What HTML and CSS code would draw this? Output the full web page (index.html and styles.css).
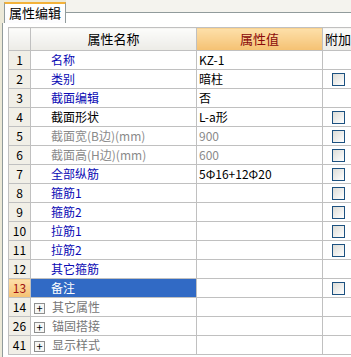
FILE: index.html
```html
<!DOCTYPE html><html><head><meta charset="utf-8"/>
<title>属性编辑</title>
<link rel="stylesheet" href="styles.css">
</head>
<body>
<div class="panel">
	<div class="tabbar">
		<div class="tab">属性编辑</div>
		<div class="tabfill"></div>
	</div>
	<div class="pane">
		<table class="grid">
			<colgroup><col class="c-no"><col class="c-name"><col class="c-val"><col class="c-add"></colgroup>
			<tr class="head">
				<th class="no"></th>
				<th>属性名称</th>
				<th class="hval">属性值</th>
				<th class="hadd">附加</th>
			</tr>
			<tr><td class="no">1</td><td class="nm blue">名称</td><td class="val">KZ-1</td><td></td></tr>
			<tr><td class="no">2</td><td class="nm blue">类别</td><td class="val">暗柱</td><td><span class="chk"></span></td></tr>
			<tr><td class="no">3</td><td class="nm blue">截面编辑</td><td class="val">否</td><td></td></tr>
			<tr><td class="no">4</td><td class="nm">截面形状</td><td class="val">L-a形</td><td><span class="chk"></span></td></tr>
			<tr><td class="no">5</td><td class="nm gray">截面宽(B边)(mm)</td><td class="val gray">900</td><td><span class="chk"></span></td></tr>
			<tr><td class="no">6</td><td class="nm gray">截面高(H边)(mm)</td><td class="val gray">600</td><td><span class="chk"></span></td></tr>
			<tr><td class="no">7</td><td class="nm blue">全部纵筋</td><td class="val">5Φ16+12Φ20</td><td><span class="chk"></span></td></tr>
			<tr><td class="no">8</td><td class="nm blue">箍筋1</td><td class="val"></td><td><span class="chk"></span></td></tr>
			<tr><td class="no">9</td><td class="nm blue">箍筋2</td><td class="val"></td><td><span class="chk"></span></td></tr>
			<tr><td class="no">10</td><td class="nm blue">拉筋1</td><td class="val"></td><td><span class="chk"></span></td></tr>
			<tr><td class="no">11</td><td class="nm blue">拉筋2</td><td class="val"></td><td><span class="chk"></span></td></tr>
			<tr><td class="no">12</td><td class="nm blue">其它箍筋</td><td class="val"></td><td></td></tr>
			<tr class="sel"><td class="no">13</td><td class="nm">备注</td><td class="val"></td><td><span class="chk"></span></td></tr>
			<tr><td class="no">14</td><td class="nm grp"><span class="plus">+</span>其它属性</td><td class="val"></td><td></td></tr>
			<tr><td class="no">26</td><td class="nm grp"><span class="plus">+</span>锚固搭接</td><td class="val"></td><td></td></tr>
			<tr><td class="no">41</td><td class="nm grp"><span class="plus">+</span>显示样式</td><td class="val"></td><td></td></tr>
		</table>
	</div>
</div>
</body>
</html>
```
FILE: styles.css
```css
html, body {
	margin: 0;
	padding: 0;
	overflow: hidden;
}
body {
	font-family: "Noto Sans CJK SC", "DejaVu Sans", sans-serif;
	font-size: 12px;
	color: #000;
	background: #ece9d8;
}
.panel {
	width: 351px;
	height: 357px;
	padding-left: 2px;
	box-sizing: border-box;
	display: flex;
	flex-direction: column;
	background: #ece9d8;
}
/* tabs */
.tabbar {
	display: flex;
	height: 23px;
}
.tab {
	margin-top: 2px;
	height: 21px;
	width: 62px;
	margin-left: 2px;
	box-sizing: border-box;
	border: 1px solid #919b9c;
	border-top: 2px solid #f3b23a;
	border-bottom: none;
	background: linear-gradient(#ffffff, #fcfcfe);
	font-size: 13px;
	line-height: 17px;
	padding-left: 4px;
}
.tabfill {
	flex: 1;
	background: linear-gradient(#f4f3ee 0 12px, #919b9c 12px 13px, #ffffff 13px);
}
.pane {
	flex: 1;
	background: #fff;
	border-left: 1px solid #919b9c;
	padding: 4px 0 0 5px;
	overflow: hidden;
}
/* grid */
.grid {
	border-collapse: collapse;
	table-layout: fixed;
	width: 362px;
}
.c-no { width: 22px; }
.c-name { width: 166px; }
.c-val { width: 126px; }
.c-add { width: 48px; }
.grid td, .grid th {
	border: 1px solid #c0c0c0;
	height: 18px;
	padding: 0;
	white-space: nowrap;
	overflow: hidden;
	line-height: 18px;
}
.grid th {
	height: 22px;
	font-weight: normal;
	font-size: 13px;
	background: linear-gradient(#fcfcfb, #ecebe6);
}
.grid th.hval {
	background: linear-gradient(#fde0aa, #f5c172);
	color: #8a0a0a;
}
.grid th.hadd {
	text-align: left;
	padding-left: 2px;
}
.grid td.no {
	text-align: center;
	background: #f1efe7;
	font-size: 12px;
}
.nm {
	padding-left: 20px !important;
}
.val {
	padding-left: 2px !important;
}
.blue { color: #0a0ab4; }
.gray { color: #8a8a8a; }
.grp {
	padding-left: 3px !important;
	color: #777;
}
.plus {
	display: inline-block;
	width: 9px;
	height: 9px;
	border: 1px solid #8e8f8f;
	background: #f7f7f5;
	color: #000;
	font-size: 11px;
	line-height: 9px;
	text-align: center;
	vertical-align: -1px;
	margin-right: 7px;
}
.sel td.no {
	background: linear-gradient(#fde0aa, #f5c172);
	color: #a01010;
}
.sel td.nm {
	background: #316ac5;
	color: #fff;
}
.chk {
	display: block;
	width: 11px;
	height: 11px;
	margin-left: 9px;
	border: 1px solid #1c5180;
	background: linear-gradient(135deg, #dcdcd7, #ffffff);
}
```
